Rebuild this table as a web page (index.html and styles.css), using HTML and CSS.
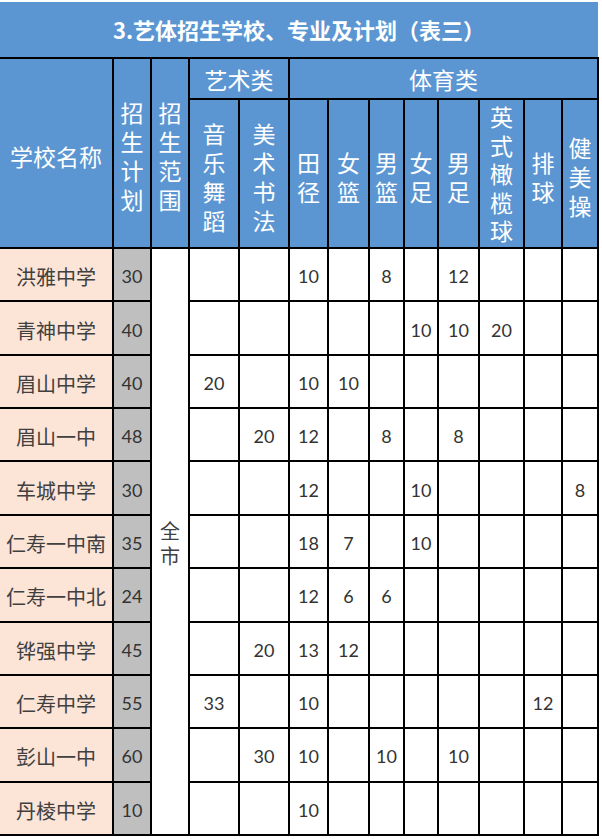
FILE: index.html
```html
<!DOCTYPE html>
<html lang="zh-CN">
<head>
<meta charset="utf-8">
<title>艺体招生学校、专业及计划（表三）</title>
<link rel="stylesheet" href="styles.css">
</head>
<body>
<div class="sheet">
  <div class="title">3.艺体招生学校、专业及计划（表三）</div>
  <div class="grid">
    <div class="h tall">学校名称</div>
    <div class="h tall"><span class="vt">招生计划</span></div>
    <div class="h tall"><span class="vt">招生范围</span></div>
    <div class="h art">艺术类</div>
    <div class="h sport">体育类</div>
    <div class="h sub"><span class="vt">音乐舞蹈</span></div>
    <div class="h sub"><span class="vt">美术书法</span></div>
    <div class="h sub"><span class="vt">田径</span></div>
    <div class="h sub"><span class="vt">女篮</span></div>
    <div class="h sub"><span class="vt">男篮</span></div>
    <div class="h sub"><span class="vt">女足</span></div>
    <div class="h sub"><span class="vt">男足</span></div>
    <div class="h sub long"><span class="vt">英式橄榄球</span></div>
    <div class="h sub"><span class="vt">排球</span></div>
    <div class="h sub"><span class="vt">健美操</span></div>

    <div class="scope"><span class="vt">全市</span></div>

    <div class="name">洪雅中学</div><div class="plan">30</div>
    <div class="d"></div><div class="d"></div><div class="d">10</div><div class="d"></div><div class="d">8</div><div class="d"></div><div class="d">12</div><div class="d"></div><div class="d"></div><div class="d"></div>

    <div class="name">青神中学</div><div class="plan">40</div>
    <div class="d"></div><div class="d"></div><div class="d"></div><div class="d"></div><div class="d"></div><div class="d">10</div><div class="d">10</div><div class="d">20</div><div class="d"></div><div class="d"></div>

    <div class="name">眉山中学</div><div class="plan">40</div>
    <div class="d">20</div><div class="d"></div><div class="d">10</div><div class="d">10</div><div class="d"></div><div class="d"></div><div class="d"></div><div class="d"></div><div class="d"></div><div class="d"></div>

    <div class="name">眉山一中</div><div class="plan">48</div>
    <div class="d"></div><div class="d">20</div><div class="d">12</div><div class="d"></div><div class="d">8</div><div class="d"></div><div class="d">8</div><div class="d"></div><div class="d"></div><div class="d"></div>

    <div class="name">车城中学</div><div class="plan">30</div>
    <div class="d"></div><div class="d"></div><div class="d">12</div><div class="d"></div><div class="d"></div><div class="d">10</div><div class="d"></div><div class="d"></div><div class="d"></div><div class="d">8</div>

    <div class="name">仁寿一中南</div><div class="plan">35</div>
    <div class="d"></div><div class="d"></div><div class="d">18</div><div class="d">7</div><div class="d"></div><div class="d">10</div><div class="d"></div><div class="d"></div><div class="d"></div><div class="d"></div>

    <div class="name">仁寿一中北</div><div class="plan">24</div>
    <div class="d"></div><div class="d"></div><div class="d">12</div><div class="d">6</div><div class="d">6</div><div class="d"></div><div class="d"></div><div class="d"></div><div class="d"></div><div class="d"></div>

    <div class="name">铧强中学</div><div class="plan">45</div>
    <div class="d"></div><div class="d">20</div><div class="d">13</div><div class="d">12</div><div class="d"></div><div class="d"></div><div class="d"></div><div class="d"></div><div class="d"></div><div class="d"></div>

    <div class="name">仁寿中学</div><div class="plan">55</div>
    <div class="d">33</div><div class="d"></div><div class="d">10</div><div class="d"></div><div class="d"></div><div class="d"></div><div class="d"></div><div class="d"></div><div class="d">12</div><div class="d"></div>

    <div class="name">彭山一中</div><div class="plan">60</div>
    <div class="d"></div><div class="d">30</div><div class="d">10</div><div class="d"></div><div class="d">10</div><div class="d"></div><div class="d">10</div><div class="d"></div><div class="d"></div><div class="d"></div>

    <div class="name">丹棱中学</div><div class="plan">10</div>
    <div class="d"></div><div class="d"></div><div class="d">10</div><div class="d"></div><div class="d"></div><div class="d"></div><div class="d"></div><div class="d"></div><div class="d"></div><div class="d"></div>
  </div>
</div>
</body>
</html>
```

FILE: styles.css
```css
html, body {
  margin: 0;
  padding: 0;
  background: #ffffff;
}

body {
  font-family: "Noto Sans CJK SC", "Noto Sans", sans-serif;
}

.sheet {
  padding-top: 2px;
  width: 599px;
}

.title {
  width: 598px;
  height: 55px;
  background: #5b96d2;
  color: #ffffff;
  font-size: 22px;
  font-weight: 700;
  line-height: 55px;
  text-align: center;
}

.grid {
  display: grid;
  grid-template-columns: 112px 36px 36px 48px 48px 37px 39px 33px 32px 39px 43px 36px 34px;
  grid-template-rows: 39px 147px repeat(11, 51.36px);
  gap: 2px;
  padding: 2px 2px 2px 0;
  background: #000000;
  width: fit-content;
}

.grid > div {
  display: flex;
  align-items: center;
  justify-content: center;
  overflow: hidden;
}

.h {
  background: #5b96d2;
  color: #ffffff;
  font-size: 23px;
}

.tall {
  grid-row: span 2;
  padding-top: 6px;
  box-sizing: border-box;
}

.sub {
  padding-top: 6px;
  box-sizing: border-box;
}

.grid > .long {
  padding-top: 0;
}

.long .vt {
  line-height: 28.6px;
}

.art {
  grid-column: span 2;
}

.sport {
  grid-column: span 8;
}

.vt {
  display: block;
  width: 1em;
  line-height: 29px;
  word-break: break-all;
  text-align: center;
}

.scope {
  grid-column: 3;
  grid-row: 3 / span 11;
  background: #ffffff;
  color: #404040;
  font-size: 20px;
}

.scope .vt {
  line-height: 25px;
  padding-top: 4px;
}

.name {
  background: #fce4d6;
  color: #404040;
  font-size: 20px;
  padding-top: 4px;
  box-sizing: border-box;
}

.plan {
  background: #bfbfbf;
  color: #333333;
  font-family: Lato, "Noto Sans CJK SC", sans-serif;
  font-size: 18px;
  padding-top: 3px;
  box-sizing: border-box;
}

.d {
  background: #ffffff;
  color: #333333;
  font-family: Lato, "Noto Sans CJK SC", sans-serif;
  font-size: 18px;
  padding-top: 3px;
  box-sizing: border-box;
}
```
